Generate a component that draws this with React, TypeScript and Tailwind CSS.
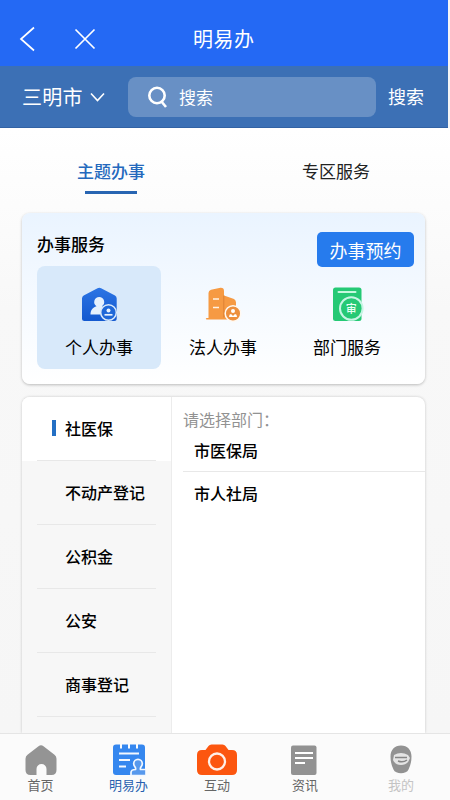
import type { ReactNode } from 'react';

const categories = ['社医保', '不动产登记', '公积金', '公安', '商事登记'];

function PersonalIcon() {
  return (
    <svg width="38" height="36" viewBox="0 0 38 36" fill="none">
      <defs>
        <linearGradient id="house" x1="0" y1="0" x2="0" y2="1">
          <stop stopColor="#2b74e4" />
          <stop offset="1" stopColor="#1459cf" />
        </linearGradient>
      </defs>
      <path d="M17.500 1.200q1.800-1 3.600 0L35 8.500q1.700 1 1.700 3V31.500q0 2.500-2.500 2.500H4.500Q2 34 2 31.500v-20q0-2 1.700-3z" fill="url(#house)" />
      <path d="M19.200 10a5 5 0 0 1 2.700 9.200c1.700.8 2.500 2 3.100 3.300v5H10.500c0-4.500 2.200-7 6-8.300A5 5 0 0 1 19.200 10z" fill="#e6f1fd" />
      <circle cx="28.500" cy="25.500" r="7.800" fill="#1f68d8" stroke="#dcebfa" strokeWidth="1.500" />
      <circle cx="28.500" cy="23.500" r="2" fill="#e6f1fd" />
      <path d="M24.500 27.800h8" stroke="#e6f1fd" strokeWidth="1.700" />
    </svg>
  );
}

function CompanyIcon() {
  return (
    <svg width="38" height="36" viewBox="0 0 38 36" fill="none">
      <path d="M4.500 31V6Q4.500 3.500 7 2.700L16.500.700Q20 .500 20 4V8.500L30 12Q32 13 32 15.500V32.500H2.500Q1 31.800 2.500 31z" fill="#f69a43" />
      <path d="M19.800 8.500v22" stroke="#df8132" strokeWidth="1" />
      <path d="M9 12h6M9 20.500h6" stroke="#fff3e5" strokeWidth="1.500" />
      <circle cx="29" cy="26.500" r="7.800" fill="#ed903e" stroke="#fff9f2" strokeWidth="1.500" />
      <circle cx="29" cy="24" r="2" fill="#fff" />
      <path d="M25 30q0-2.800 2-3l2 2 2-2q2 .200 2 3z" fill="#fff" />
    </svg>
  );
}

function DepartmentIcon() {
  return (
    <svg width="38" height="36" viewBox="0 0 38 36" fill="none">
      <rect x="5" y=".5" width="28.500" height="33.500" rx="2.500" fill="#25c975" />
      <path d="M10.500 5h17" stroke="#c6f8df" strokeWidth="2" strokeLinecap="round" />
      <circle cx="23.300" cy="21.500" r="11.300" fill="#25c975" stroke="#c6f5e4" strokeWidth="2" />
      <text x="23.300" y="25.600" fontSize="11" fontWeight="500" fill="#e8fff3" textAnchor="middle">审</text>
    </svg>
  );
}

function Service({ label, active, children }: { label: string; active?: boolean; children: ReactNode }) {
  return (
    <div className={`flex h-[103px] w-[124px] flex-col items-center rounded-lg pt-[21px] ${active ? 'bg-[#d8e9fa]' : ''}`}>
      {children}
      <span className="mt-3 text-[17px] leading-6">{label}</span>
    </div>
  );
}

function NavItem({ label, className, children }: { label: string; className?: string; children: ReactNode }) {
  return (
    <div className={`flex flex-col items-center pt-[9px] text-[13px] leading-4 ${className ?? 'text-[#666]'}`}>
      {children}
      <span className="whitespace-nowrap">{label}</span>
    </div>
  );
}

export default function App() {
  return (
    <div className="flex h-[800px] w-[450px] flex-col overflow-hidden bg-[#f6f6f6] font-['Noto_Sans_CJK_SC',sans-serif] text-black">
      <div className="mr-[2px] flex h-[66px] shrink-0 items-center bg-[#2469f4] pt-[12px] text-white">
        <svg className="ml-[19px]" width="17" height="26" viewBox="0 0 17 26" fill="none" stroke="currentColor" strokeWidth="1.700">
          <path d="M15 1.500 2 13l13 11.500" />
        </svg>
        <svg className="ml-[38px]" width="22" height="22" viewBox="0 0 22 22" stroke="currentColor" strokeWidth="1.700">
          <path d="m1.500 1.500 19 19M20.500 1.500l-19 19" />
        </svg>
        <h1 className="ml-[97px] text-[20px] leading-7 tracking-[0.5px]">明易办</h1>
      </div>

      <div className="mr-[2px] flex h-[62px] shrink-0 items-center border-b border-[#3262a4] bg-[#3c70b5] text-white">
        <span className="ml-[22px] w-16 text-[20px] leading-7 tracking-[0.3px]">三明市</span>
        <svg className="ml-1" width="15" height="10" viewBox="0 0 15 10" fill="none" stroke="currentColor" strokeWidth="1.600">
          <path d="m1 1.500 6.500 7 6.500-7" />
        </svg>
        <div className="ml-[23px] flex h-10 w-[248px] items-center rounded-lg bg-[#6890c5] pl-5">
          <svg width="20" height="22" viewBox="0 0 20 22" fill="none" stroke="currentColor" strokeWidth="2.600">
            <circle cx="9" cy="9.500" r="7.700" />
            <path d="m13 15 5 6" />
          </svg>
          <span className="ml-[11px] text-[17px] leading-6">搜索</span>
        </div>
        <span className="ml-3 text-[18px]">搜索</span>
      </div>

      <main className="flex min-h-0 flex-1 flex-col bg-linear-to-b from-white via-[#f8f8f8] via-30% to-[#f6f6f6] px-[22px]">
        <div className="flex h-[85px] shrink-0 text-[17px] leading-6">
          <div className="flex w-[178px] flex-col items-center pt-[31px] font-medium text-[#2469bd]">
            <span>主题办事</span>
            <i className="mt-2 h-[3px] w-[52px] bg-[#2865b2]" />
          </div>
          <span className="ml-[102px] pt-[31px] text-[#222]">专区服务</span>
        </div>

        <section className="h-[171px] w-[403px] shrink-0 rounded-lg bg-linear-to-b from-[#eaf4ff] to-white px-[15px] shadow-[0_1px_3px_rgba(0,0,0,0.25)]">
          <div className="flex h-[53px] items-start justify-between pt-[19px]">
            <h2 className="text-[17px] leading-6 font-medium">办事服务</h2>
            <button className="-mr-1 h-[35px] w-[97px] rounded-[5px] bg-[#267bed] text-[18px] leading-none whitespace-nowrap text-white">
              办事预约
            </button>
          </div>
          <div className="flex">
            <Service label="个人办事" active><PersonalIcon /></Service>
            <Service label="法人办事"><CompanyIcon /></Service>
            <Service label="部门服务"><DepartmentIcon /></Service>
          </div>
        </section>

        <section className="mt-[13px] flex min-h-0 w-[403px] flex-1 overflow-hidden rounded-t-lg bg-white shadow-[0_0_3px_rgba(0,0,0,0.2)]">
          <div className="w-[150px] shrink-0 border-r border-[#ececec] bg-[#f7f7f7]">
            {categories.map((name, i) => (
              <div key={name} className={`h-16 px-[15px] ${i === 0 ? 'bg-white' : ''}`}>
                <div className="flex h-16 items-center border-b border-[#e8e8e8] pb-0.5 pl-[15px] text-[16px] font-medium whitespace-nowrap">
                  <i className={`mr-[9px] h-4 w-1 shrink-0 ${i === 0 ? 'bg-[#246fc4]' : ''}`} />
                  {name}
                </div>
              </div>
            ))}
          </div>
          <div className="flex-1 pt-[10px] pl-[11px] text-[16px] leading-6">
            <p className="text-[#929292]">请选择部门：</p>
            <div className="h-[41px] border-b border-[#e8e8e8] pt-[7px] pl-[11px] font-medium">市医保局</div>
            <div className="pt-[9px] pl-[11px] font-medium">市人社局</div>
          </div>
        </section>
      </main>

      <nav className="grid h-[67px] shrink-0 grid-cols-[81px_95px_82px_94px_98px] border-t border-[#e5e5e5] bg-[#fbfbfb]">
        <NavItem label="首页">
          <svg width="34" height="34" viewBox="0 0 34 34" fill="#949494">
            <path d="M14.500 3.200q2.500-2 5 0l11 8.500q2 1.500 2 4V27q0 5-5 5h-5v-6a5 5 0 0 0-10 0v6h-6q-5 0-5-5V15.700q0-2.500 2-4z" />
          </svg>
        </NavItem>
        <NavItem label="明易办" className="text-[#285faf]">
          <svg width="34" height="34" viewBox="0 0 34 34" fill="none">
            <rect x="1" y="1.500" width="32" height="30.500" rx="3" fill="#3587ef" />
            <path d="M9 0v5.500M17 0v5.500M25 0v5.500" stroke="#fbfbfb" strokeWidth="2" />
            <path d="M7 10.500h20M7 17h11M7 23.500h7" stroke="#f2f8ff" strokeWidth="1.800" />
            <path d="M23.500 26.500c1-2-1.800-3-1.800-5.800a4.300 4.300 0 0 1 8.600 0c0 2.800-2.800 3.800-1.800 5.800H34v6H19v-3q0-3 4.500-3z" fill="#5799ed" stroke="#f2f8ff" strokeWidth="1.700" />
          </svg>
        </NavItem>
        <NavItem label="互动">
          <svg width="42" height="34" viewBox="0 0 42 34">
            <path d="M6 7h3.500l3-4q1-1.500 3-1.500h11q2 0 3 1.500l3 4H36q5 0 5 5v15q0 5-5 5H6q-5 0-5-5V12q0-5 5-5z" fill="#fc560f" />
            <circle cx="21" cy="18.500" r="8" fill="none" stroke="#fff0e8" strokeWidth="2.300" />
          </svg>
        </NavItem>
        <NavItem label="资讯">
          <svg width="34" height="34" viewBox="0 0 34 34">
            <rect x="3" y="2.500" width="25.500" height="29.500" rx="2" fill="#929292" />
            <path d="M7 10h18M7 15h18M7 20h10" stroke="#fff" strokeWidth="1.800" />
          </svg>
        </NavItem>
        <NavItem label="我的" className="text-[#c4c4c4]">
          <svg width="34" height="34" viewBox="0 0 34 34">
            <path d="M17 2.500c6.500 0 10.500 4.500 10.500 11 0 5-1 9-3 13-2 5-13 5-15 0-2-4-3-8-3-13C6.500 7 10.500 2.500 17 2.500z" fill="#929292" />
            <path d="M10 12q7-4 14 0l2 3q-2 7-9 7-6 0-8-5z" fill="#e4e4e4" />
            <path d="M11 14.500h12M14 18q5 2 9-1" fill="none" stroke="#858585" strokeWidth="1.500" />
          </svg>
        </NavItem>
      </nav>
    </div>
  );
}
